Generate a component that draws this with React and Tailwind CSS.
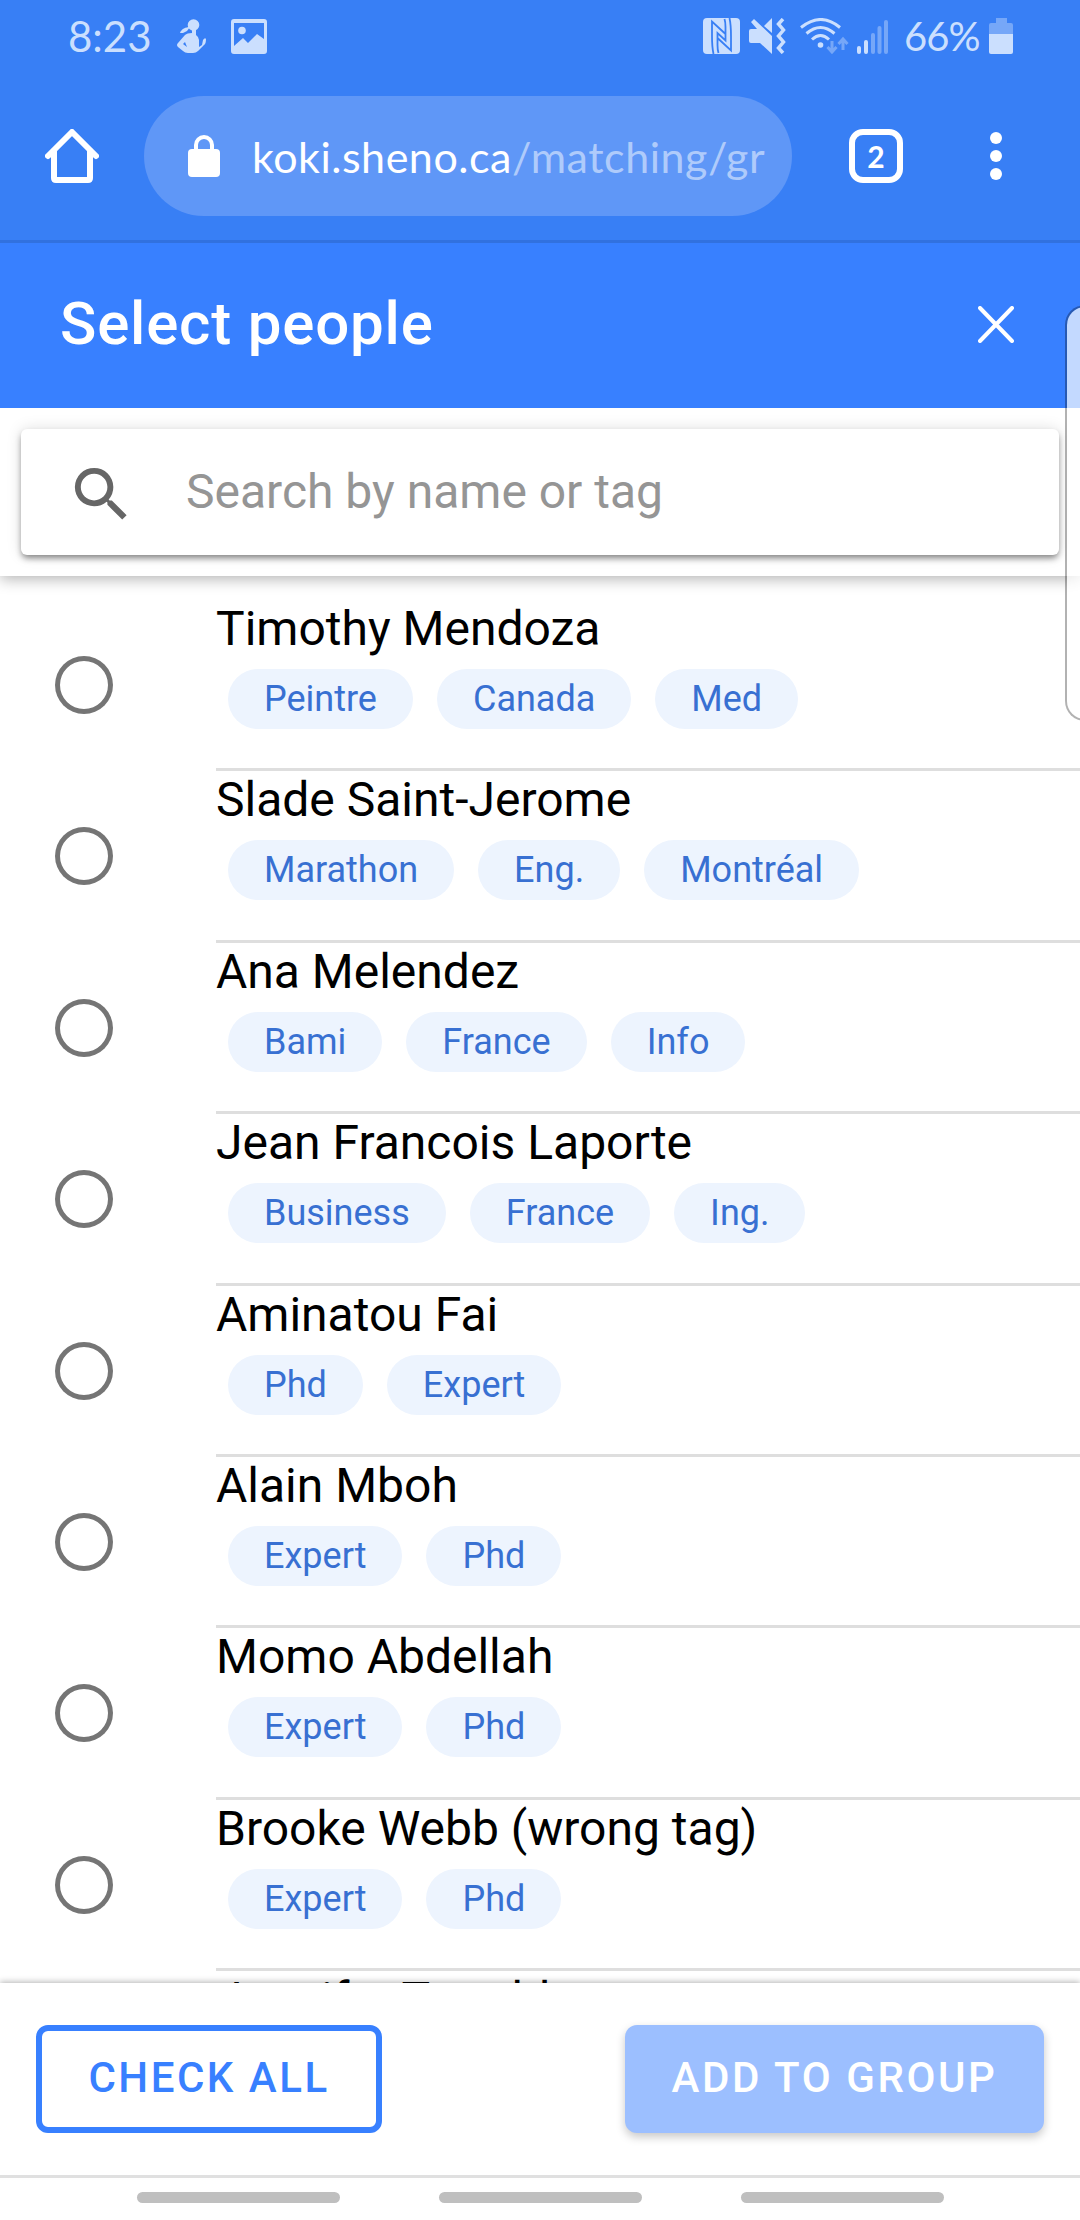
import { MdSearch } from "react-icons/md";

const PEOPLE = [
  { name: "Timothy Mendoza", tags: ["Peintre", "Canada", "Med"] },
  { name: "Slade Saint-Jerome", tags: ["Marathon", "Eng.", "Montréal"] },
  { name: "Ana Melendez", tags: ["Bami", "France", "Info"] },
  { name: "Jean Francois Laporte", tags: ["Business", "France", "Ing."] },
  { name: "Aminatou Fai", tags: ["Phd", "Expert"] },
  { name: "Alain Mboh", tags: ["Expert", "Phd"] },
  { name: "Momo Abdellah", tags: ["Expert", "Phd"] },
  { name: "Brooke Webb (wrong tag)", tags: ["Expert", "Phd"] },
  { name: "Jennifer Tremblay", tags: [] },
];

function StatusBar() {
  return (
    <div className="flex h-[72px] items-center pl-[68px] pr-[67px] text-[#cbdffe] font-['Lato',sans-serif]">
      <span className="w-[82px] whitespace-nowrap text-[42px] leading-none">8:23</span>
      <svg className="ml-[27px] h-[36px] w-[30px] shrink-0" viewBox="0 0 30 36" fill="currentColor">
        <circle cx="16.500" cy="7" r="5.800" />
        <path d="M15 11h4v6q3 2 3 5v7l3-2 1-5q2-3 3-1 0 5-2 6l-6 6q-2 2-5 2h-5q-3 0-5-2l-5-4q-2-2 0-4l7-8q2-2 7-2zM8 24l-2 2 4 3z" fillRule="evenodd" />
        <path d="M3 15c1-4 6-6 10-6l-3 4-4 2z" />
      </svg>
      <svg className="ml-[24px] h-[35px] w-[36px] shrink-0" viewBox="0 0 36 35" fill="currentColor">
        <path fillRule="evenodd" d="M3 0h30a3 3 0 0 1 3 3v29a3 3 0 0 1-3 3H3a3 3 0 0 1-3-3V3a3 3 0 0 1 3-3zM3 4v23l9-8 5 5 9-9 7 5V4z" />
        <circle cx="11" cy="11.500" r="3.800" />
      </svg>
      <div className="ml-auto flex items-center">
        <svg className="h-[36px] w-[37px]" viewBox="0 0 37 36">
          <rect width="37" height="36" rx="4" fill="currentColor" />
          <path d="M10.500 36Q9 29 9 18V3.500L22.500 16v6.500L14.500 15v5L28 32.500V18Q28 7 26.500 0M14.500 18v9Q14.500 32 15.500 35M22.500 18V9Q22.500 4 21.500 1" fill="none" stroke="#387ff5" strokeWidth="1.800" />
        </svg>
        <svg className="ml-[9px] h-[36px] w-[37px]" viewBox="0 0 37 36" fill="currentColor">
          <path d="M0 13q0-2 2-2h6L2 4l3-3 18 17v18L11 25H2q-2 0-2-2zM15 8l8-8v15z" />
          <path d="M34 1l-4.500 5 5 6-5 6 5 6-5 6 4.500 5" fill="none" stroke="currentColor" strokeWidth="3.500" />
        </svg>
        <svg className="ml-[14px] h-[36px] w-[49px]" viewBox="0 0 49 36" fill="none" stroke="currentColor" strokeWidth="3">
          <path d="M1 9.500q20-16 39 0M6.500 15.500q14-12 28 0M12 21.500q8.500-8 17 0" />
          <circle cx="20.500" cy="27" r="2.800" fill="currentColor" stroke="none" />
          <path d="M32 23v11M27.500 29l4.500 5 4.500-5M43 32V21M38.500 26l4.500-5 4.500 5" stroke="#76a7f8" />
        </svg>
        <svg className="ml-[8px] h-[36px] w-[32px]" viewBox="0 0 32 36" fill="currentColor">
          <rect x="0" y="28" width="4" height="8" rx="2" />
          <rect x="7" y="22" width="4" height="14" rx="2" />
          <g fill="#76a7f8">
            <rect x="14" y="15" width="4" height="21" rx="2" />
            <rect x="20.500" y="8" width="4" height="28" rx="2" />
            <rect x="27" y="2" width="4" height="34" rx="2" />
          </g>
        </svg>
        <span className="ml-[15px] w-[78px] whitespace-nowrap text-[40px] leading-none tracking-[-1px]">66%</span>
        <svg className="ml-[7px] h-[36px] w-[24px]" viewBox="0 0 24 36">
          <path d="M7 0h11v5h4a2 2 0 0 1 2 2v9H0V7a2 2 0 0 1 2-2h5z" fill="#76a7f8" />
          <path d="M0 16h24v18a2 2 0 0 1-2 2H2a2 2 0 0 1-2-2z" fill="currentColor" />
        </svg>
      </div>
    </div>
  );
}

function BrowserBar() {
  return (
    <div className="flex h-[171px] items-start border-b-[3px] border-[#3171df] text-white font-['Lato',sans-serif]">
      <svg className="ml-[45px] mt-[57px] h-[54px] w-[54px] shrink-0" viewBox="0 0 54 54" fill="none" stroke="currentColor" strokeWidth="6" strokeLinecap="round" strokeLinejoin="round">
        <path d="M3 27L27 3l24 24" />
        <path d="M9 22v27q0 2 2 2h32q2 0 2-2V22" />
      </svg>
      <div className="ml-[45px] mt-[24px] flex h-[120px] w-[648px] shrink-0 items-center rounded-full bg-[#5f97f7]">
        <svg className="ml-[44px] h-[42px] w-[32px] shrink-0" viewBox="0 0 32 42">
          <rect y="14" width="32" height="28" rx="4" fill="currentColor" />
          <path d="M8 16V10a8 8 0 0 1 16 0v6" fill="none" stroke="currentColor" strokeWidth="4" />
        </svg>
        <span className="ml-[32px] mt-[3px] whitespace-nowrap text-[43px] tracking-[0.530px]">
          koki.sheno.ca<span className="text-[#afcbfb]">/matching/gr</span>
        </span>
      </div>
      <div className="ml-[57px] mt-[57px] flex h-[54px] w-[54px] shrink-0 items-center justify-center rounded-[14px] border-[6px] border-white text-[30px] font-bold leading-none">
        2
      </div>
      <div className="ml-[87px] mt-[60px] flex flex-col gap-[6px]">
        <i className="size-[12px] rounded-full bg-white" />
        <i className="size-[12px] rounded-full bg-white" />
        <i className="size-[12px] rounded-full bg-white" />
      </div>
    </div>
  );
}

function Person({ name, tags }) {
  return (
    <li className="flex h-[171.400px] shrink-0">
      <div className="flex w-[216px] shrink-0 pl-[55px] pt-[56px]">
        <span className="size-[58px] rounded-full shadow-[inset_0_0_0_5px_#757575]" />
      </div>
      <div className="flex-1 border-b-[3px] border-[#dedede]">
        <div className="h-[69px] whitespace-nowrap text-[48px] leading-[58px] text-black">{name}</div>
        <div className="flex gap-[24px] pl-[12px]">
          {tags.map((t) => (
            <span key={t} className="flex h-[60px] items-center rounded-full bg-[#edf4fe] px-[36px] text-[36px] text-[#3870d2]">
              {t}
            </span>
          ))}
        </div>
      </div>
    </li>
  );
}

export default function App() {
  return (
    <div className="relative flex h-[2220px] w-[1080px] flex-col overflow-hidden bg-white font-['Roboto',sans-serif]">
      <div className="bg-[#387ff5]">
        <StatusBar />
        <BrowserBar />
      </div>
      <header className="relative z-20 flex h-[165px] shrink-0 items-center justify-between bg-[#3880ff] pl-[60px] pr-[66px] text-white">
        <h1 className="-mt-[3px] text-[60px] font-medium tracking-[0.800px]">Select people</h1>
        <svg className="-mt-[3px] h-[37px] w-[36px]" viewBox="0 0 36 37" stroke="currentColor" strokeWidth="4" strokeLinecap="round">
          <path d="M2 2l32 33M34 2L2 35" />
        </svg>
      </header>
      <div className="z-10 flex h-[168px] shrink-0 items-start px-[21px] pt-[21px] shadow-[0_3px_14px_rgba(0,0,0,0.300)]">
        <div className="flex h-[126px] flex-1 items-center rounded-[6px] bg-white pl-[45px] shadow-[0_4px_6px_-1px_rgba(0,0,0,0.450),0_0_15px_rgba(0,0,0,0.130)]">
          <MdSearch className="mt-[5px] size-[71px] text-[#666]" />
          <span className="ml-[49px] text-[48px] text-[#959595]">Search by name or tag</span>
        </div>
      </div>
      <ul className="flex h-[1407px] shrink-0 flex-col overflow-hidden pt-[24px]">
        {PEOPLE.map((p) => (
          <Person key={p.name} {...p} />
        ))}
      </ul>
      <footer className="z-10 flex h-[192px] shrink-0 items-start justify-between bg-white px-[36px] pt-[42px] shadow-[0_-1px_6px_rgba(0,0,0,0.300)]">
        <button className="h-[108px] w-[346px] rounded-[12px] border-[6px] border-[#3880ff] pb-[3px] text-[42px] font-medium tracking-[2.520px] text-[#3880ff]">
          CHECK ALL
        </button>
        <button className="h-[108px] w-[419px] rounded-[12px] bg-[#9cbfff] pb-[3px] text-[42px] font-medium tracking-[2.600px] text-white shadow-[0_4px_10px_rgba(0,0,0,0.220)]">
          ADD TO GROUP
        </button>
      </footer>
      <nav className="z-10 flex h-[45px] shrink-0 justify-center gap-[99px] border-t-[3px] border-[#e0e0e0] bg-white pt-[14px]">
        <i className="h-[11px] w-[203px] rounded-full bg-[#bfbfbf]" />
        <i className="h-[11px] w-[203px] rounded-full bg-[#bfbfbf]" />
        <i className="h-[11px] w-[203px] rounded-full bg-[#bfbfbf]" />
      </nav>
      <div className="absolute left-[1065px] top-[305px] z-30 h-[416px] w-[40px] rounded-l-[20px] border-[2px] border-black/30 bg-white/70 bg-clip-padding" />
    </div>
  );
}
